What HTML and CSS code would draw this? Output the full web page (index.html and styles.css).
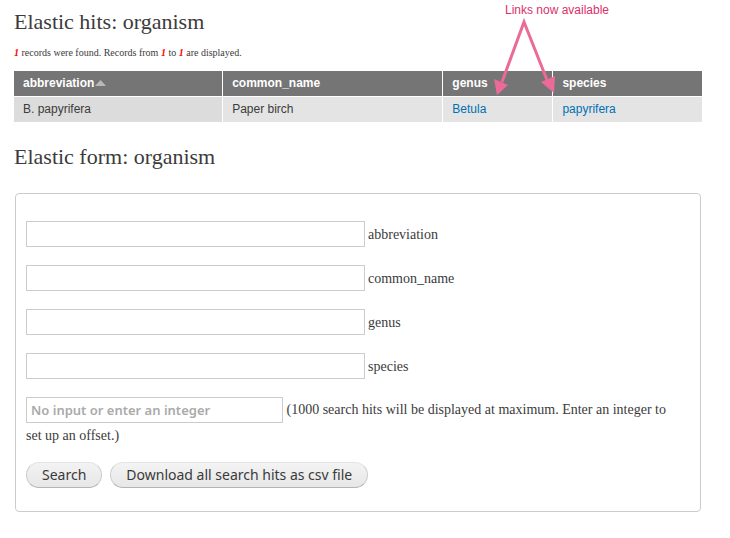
FILE: index.html
```
<!DOCTYPE html>
<html lang="en">
<head>
<meta charset="utf-8">
<title>Elastic hits: organism</title>
<link rel="stylesheet" href="styles.css">
</head>
<body>
<main class="page">
  <section class="hits">
    <h2 class="title">Elastic hits: organism</h2>
    <p class="summary"><em>1</em> records were found. Records from <em>1</em> to <em>1</em> are displayed.</p>
    <table class="results">
      <colgroup><col class="col-abbr"><col class="col-common"><col class="col-genus"><col class="col-species"></colgroup>
      <thead>
        <tr>
          <th scope="col">abbreviation<svg class="sort" width="11" height="6" viewBox="0 0 11 6" aria-hidden="true"><path d="M0 6L5.5 0L11 6Z" fill="#b8b8b8"/></svg></th>
          <th scope="col">common_name</th>
          <th scope="col">genus</th>
          <th scope="col">species</th>
        </tr>
      </thead>
      <tbody>
        <tr>
          <td class="active">B. papyrifera</td>
          <td>Paper birch</td>
          <td><a href="#">Betula</a></td>
          <td><a href="#">papyrifera</a></td>
        </tr>
      </tbody>
    </table>
    <div class="note">
      <span>Links now available</span>
      <svg class="arrows" width="64" height="76" viewBox="0 0 64 76" aria-hidden="true">
        <path d="M10 64L32 4L55 62" fill="none" stroke="#ec6a98" stroke-width="3"/>
        <path d="M2 61L16 67L5 77ZM63 58L49 64L62 75Z" fill="#ec6a98"/>
      </svg>
    </div>
  </section>

  <section>
    <h2 class="title">Elastic form: organism</h2>
    <form>
      <fieldset class="panel">
        <div class="field"><input class="box" id="abbreviation" type="text"><label for="abbreviation">abbreviation</label></div>
        <div class="field"><input class="box" id="common" type="text"><label for="common">common_name</label></div>
        <div class="field"><input class="box" id="genus" type="text"><label for="genus">genus</label></div>
        <div class="field"><input class="box" id="species" type="text"><label for="species">species</label></div>
        <div class="offset"><input class="box box-short" id="offset" type="text" placeholder="No input or enter an integer"> <label for="offset">(1000 search hits will be displayed at maximum. Enter an integer to set up an offset.)</label></div>
        <div class="actions">
          <button class="button" type="submit">Search</button>
          <button class="button" type="button">Download all search hits as csv file</button>
        </div>
      </fieldset>
    </form>
  </section>
</main>
</body>
</html>
```
FILE: styles.css
```
* {
  box-sizing: border-box;
}

body {
  margin: 0;
  background: #fff;
  color: #3b3b3b;
  font: 14px/25px "Liberation Serif", serif;
}

.page {
  padding: 8px 28px 24px 14px;
}

.hits {
  position: relative;
}

.title {
  margin: 0;
  font-size: 22px;
  line-height: 28px;
  font-weight: normal;
}

.summary {
  margin: 8px 0 10px;
  font-size: 10px;
  line-height: 17px;
}

.summary em {
  color: #f00;
  font-weight: bold;
}

.results {
  width: 100%;
  margin-bottom: 21px;
  table-layout: fixed;
  border-collapse: separate;
  border-spacing: 0;
  font: 12px/15px "Liberation Sans", sans-serif;
}

.col-abbr {
  width: 30.4%;
}

.col-common {
  width: 32%;
}

.col-genus {
  width: 16%;
}

.results th,
.results td {
  padding: 5px 9px;
  border-right: 1px solid #fff;
  text-align: left;
}

.results th:last-child,
.results td:last-child {
  border-right: 0;
}

.results th {
  background: #757575;
  border-bottom: 1px solid #fff;
  color: #fff;
}

.results td {
  background: #e4e4e4;
}

.results .active {
  background: #dcdcdc;
}

.results a {
  color: #0071b3;
  text-decoration: none;
}

.sort {
  margin-left: 1px;
  vertical-align: 1px;
}

.note {
  position: absolute;
  top: -6px;
  left: 478px;
  display: flex;
  flex-direction: column;
  color: #db3069;
  font: 12px/16px "Liberation Sans", sans-serif;
  text-align: center;
  width: 130px;
}

.arrows {
  align-self: flex-start;
  overflow: visible;
}

.panel {
  margin: 22px 1px 0;
  padding: 27px 10px 23px;
  border: 1px solid #ccc;
  border-radius: 4px;
}

.field {
  display: flex;
  align-items: center;
  gap: 3px;
  margin-bottom: 18px;
}

.box {
  width: 339px;
  height: 26px;
  padding: 4px;
  border: 1px solid #ccc;
  border-radius: 0;
  background: #fff;
  color: #3b3b3b;
  font: 13px/16px "Noto Sans", sans-serif;
}

.offset {
  padding-right: 8px;
}

.box-short {
  width: 257px;
  vertical-align: top;
}

.box::placeholder {
  color: #aaa;
  font-weight: 600;
  opacity: 1;
}

.actions {
  display: flex;
  gap: 8px;
  margin-top: 14px;
}

.button {
  height: 26px;
  padding: 0 15px;
  border: 1px solid #ccc;
  border-top-color: #e4e4e4;
  border-bottom-color: #b4b4b4;
  border-radius: 13px;
  background: linear-gradient(#f3f3f3, #e7e7e7);
  color: #3a3a3a;
  font: 14px/20px "Noto Sans", sans-serif;
}
```
